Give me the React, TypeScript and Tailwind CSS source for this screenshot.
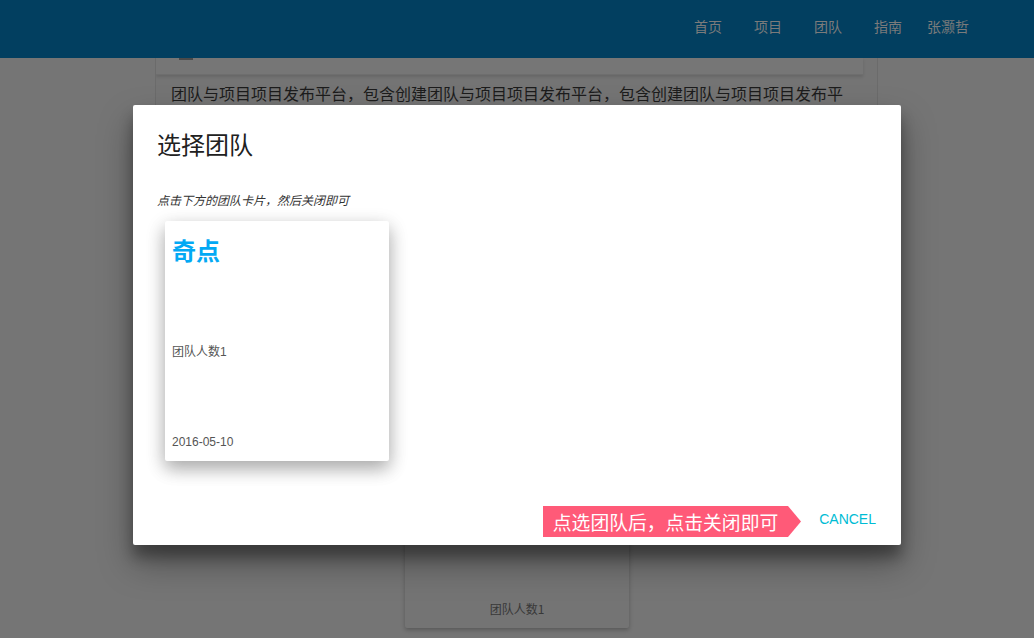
import React from "react";

const cjk = { fontFamily: "'Noto Sans CJK SC', 'Liberation Sans', sans-serif" };
const latin = { fontFamily: "'Liberation Sans', 'Noto Sans CJK SC', sans-serif" };

export default function App() {
  const line = "团队与项目项目发布平台，包含创建团队与项目项目发布平台，包含创建团队与项目项目发布平";
  const prev = "包含创建团队与项目项目发布平台，包含创建团队与项目项目发布平台，包含创建团队与项目项";
  return (
    <div className="relative w-full h-[638px] overflow-hidden bg-[#757575]" style={cjk}>
      {/* Header (dimmed) */}
      <header className="relative z-10 h-[58px] bg-[#023f60] flex items-start justify-end pr-[65px]">
        <nav className="flex pt-[16px] text-[14px] leading-[20px] text-[#7b7b7b]">
          <span className="px-[16px]">首页</span>
          <span className="px-[16px]">项目</span>
          <span className="px-[16px]">团队</span>
          <span className="pl-[16px] pr-[9px]">指南</span>
          <span className="pl-[16px]">张灏哲</span>
        </nav>
      </header>

      {/* Background content (dimmed) */}
      <main className="flex flex-col">
        <section className="relative ml-[155px] w-[723px] h-[230px] border-x border-[#6b6b6b] bg-[#747474] overflow-hidden">
          <div className="absolute left-0 top-0 w-[707px] h-[17px] bg-[#767676] border-b border-[#6e6e6e] shadow-[0_2px_3px_rgba(0,0,0,0.12)] z-10">
            <div className="ml-[23px] w-[14px] h-[2px] bg-[#4a4a4a]" />
          </div>
          <div className="absolute left-[15px] top-[-10px] w-[700px] text-[16px] leading-[30px] text-[#1c1c1c] whitespace-nowrap overflow-hidden">
            <p>{prev}</p>
            <p>{line}</p>
            <p>{prev}</p>
          </div>
        </section>
        <div className="flex justify-center mt-[100px]">
          <div className="w-[224px] h-[240px] bg-[#747474] rounded-[2px] shadow-[0_2px_4px_rgba(0,0,0,0.25)] flex flex-col justify-end items-center pb-[11px]">
            <span className="text-[12px] leading-[16px] text-[#383838]">团队人数1</span>
          </div>
        </div>
      </main>

      {/* Modal */}
      <div className="absolute left-[133px] top-[105px] w-[768px] h-[440px] bg-white rounded-[2px] flex flex-col z-20 shadow-[0_18px_34px_rgba(0,0,0,0.34),0_12px_14px_rgba(0,0,0,0.3)]">
        <div className="flex-1 px-[24px] pt-[23px]">
          <h4 className="text-[24px] leading-[32px] text-[#212121] font-normal">选择团队</h4>
          <p className="mt-[32px] text-[12px] leading-[16px] italic text-[#333333]">点击下方的团队卡片，然后关闭即可</p>
          <div className="mt-[13px] ml-[8px] w-[224px] h-[240px] bg-white rounded-[2px] shadow-[0_8px_17px_rgba(0,0,0,0.2),0_6px_20px_rgba(0,0,0,0.19)] flex flex-col pl-[7px] pr-[8px] pt-[13px]">
            <div className="text-[24px] leading-[32px] font-bold text-[#03a9f4]">奇点</div>
            <div className="mt-[77px] text-[12px] leading-[16px] text-[#555555]" style={latin}>
              <span style={cjk}>团队人数</span>1
            </div>
            <div className="mt-[74px] text-[12px] leading-[16px] text-[#555555]" style={latin}>2016-05-10</div>
          </div>
        </div>
        <div className="flex items-end justify-end pr-[9px] pb-[8px]">
          <div className="flex items-stretch h-[31px] mr-[2px]">
            <div className="bg-[#ff5a78] pl-[10px] pr-[10px] flex items-center text-white text-[18.8px] leading-[31px] whitespace-nowrap">
              点选团队后，点击关闭即可
            </div>
            <svg width="13" height="31" viewBox="0 0 13 31" className="block">
              <polygon points="0,0 13,15.5 0,31" fill="#ff5a78" />
            </svg>
          </div>
          <button className="h-[36px] px-[16px] text-[14px] leading-[36px] text-[#00bcd4] uppercase" style={latin}>
            CANCEL
          </button>
        </div>
      </div>
    </div>
  );
}
